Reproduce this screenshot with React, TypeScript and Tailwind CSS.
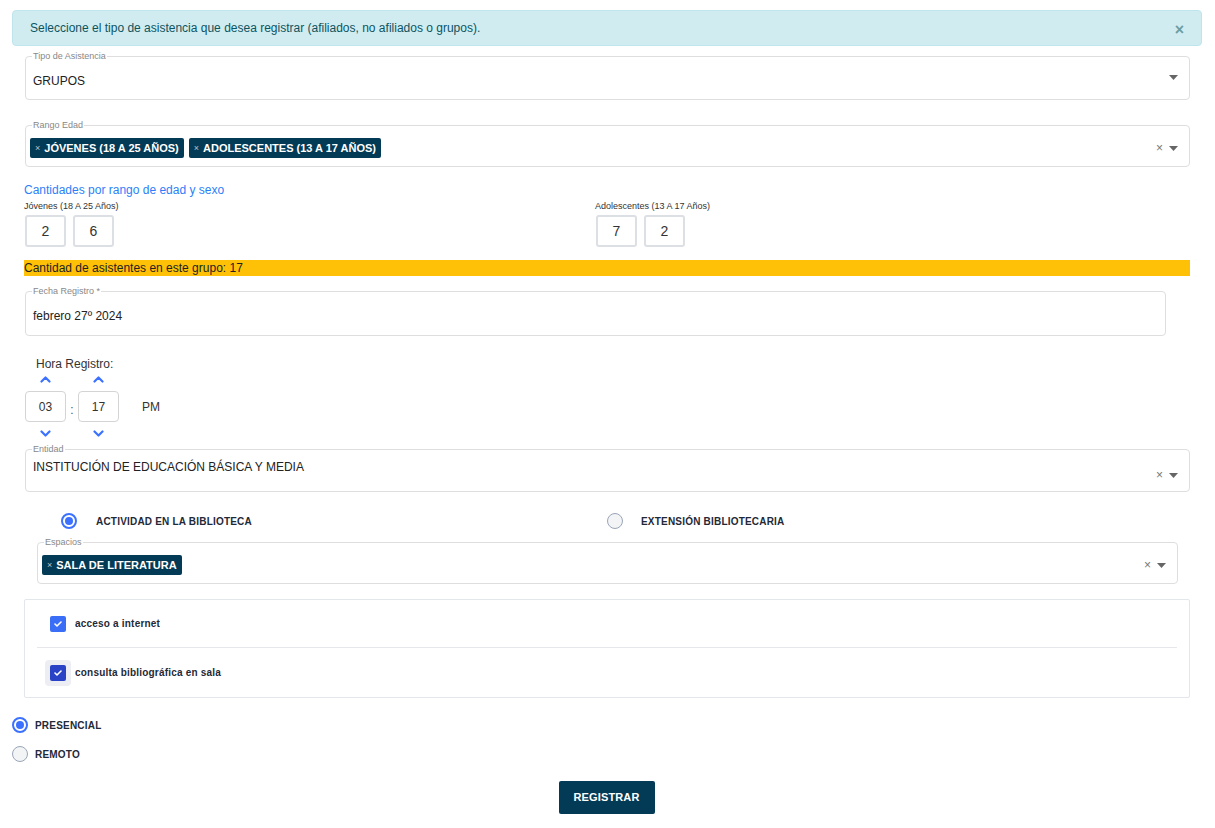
import React from "react";

function Caret() {
  return (
    <svg width="9" height="5" viewBox="0 0 9 5" className="block">
      <path d="M0 0 L9 0 L4.5 5 Z" fill="#666" />
    </svg>
  );
}

function Clear() {
  return <span className="text-[12px] leading-none text-[#777]">×</span>;
}

function Chip({ text }: { text: string }) {
  return (
    <span className="inline-flex h-[20px] items-center rounded-[2px] bg-[#033a56] pl-[5px] pr-[5px] text-white">
      <span className="mr-[4px] text-[9px] leading-none text-[#b9c4cc]">×</span>
      <span className="text-[11px] font-bold leading-none">{text}</span>
    </span>
  );
}

function Field({
  legend,
  className,
  children,
}: {
  legend: string;
  className?: string;
  children: React.ReactNode;
}) {
  return (
    <fieldset className={`rounded-[4px] border border-[#dedede] pl-[7px] pr-[8px] ${className ?? ""}`}>
      <legend className="-ml-[1px] px-[1px] text-[9px] leading-[10px] text-[#888]">{legend}</legend>
      {children}
    </fieldset>
  );
}

function NumBox({ v }: { v: string }) {
  return (
    <div className="flex h-[32px] w-[41px] items-center justify-center rounded-[3px] border-2 border-[#dcdfe3] text-[14px] text-[#333]">
      {v}
    </div>
  );
}

function ChevUp() {
  return (
    <svg width="11" height="7" viewBox="0 0 11 7" className="block">
      <path d="M1.5 5.5 L5.5 1.5 L9.5 5.5" fill="none" stroke="#3b71fe" strokeWidth="2.2" strokeLinecap="round" strokeLinejoin="round" />
    </svg>
  );
}
function ChevDown() {
  return (
    <svg width="11" height="7" viewBox="0 0 11 7" className="block">
      <path d="M1.5 1.5 L5.5 5.5 L9.5 1.5" fill="none" stroke="#3b71fe" strokeWidth="2.2" strokeLinecap="round" strokeLinejoin="round" />
    </svg>
  );
}

function Radio({ on }: { on: boolean }) {
  return on ? (
    <span className="flex h-[16px] w-[16px] items-center justify-center rounded-full border-2 border-[#3b71fe] bg-white">
      <span className="h-[8px] w-[8px] rounded-full bg-[#3b71fe]" />
    </span>
  ) : (
    <span className="block h-[16px] w-[16px] rounded-full border border-[#9aa5b8] bg-[#f3f4f6]" />
  );
}

function Check({ dark }: { dark?: boolean }) {
  const box = (
    <span className={`flex h-[16px] w-[16px] items-center justify-center rounded-[2px] ${dark ? "bg-[#2a43c6]" : "bg-[#3b6ef6]"}`}>
      <svg width="8" height="6" viewBox="0 0 8 6">
        <path d="M1 3 L3 5 L7 1" fill="none" stroke="white" strokeWidth="1.6" strokeLinecap="round" strokeLinejoin="round" />
      </svg>
    </span>
  );
  if (dark)
    return (
      <span className="-m-[5px] flex h-[26px] w-[26px] items-center justify-center rounded-[4px] bg-[#eceef3]">{box}</span>
    );
  return box;
}

export default function App() {
  return (
    <div className="min-h-[828px] w-[1215px] bg-white pb-[14px] font-['Liberation_Sans',Arial,sans-serif] text-[#222]">
      {/* Alert */}
      <div className="ml-[12px] mt-[10px] flex h-[36px] w-[1190px] items-center justify-between rounded-[4px] border border-[#bee5eb] bg-[#d1ecf1] pl-[17px] pr-[17px]">
        <span className="text-[12px] text-[#0c5460]">
          Seleccione el tipo de asistencia que desea registrar (afiliados, no afiliados o grupos).
        </span>
        <span className="mt-[4px] text-[16px] font-bold leading-none text-[#6a9ea3]">×</span>
      </div>

      {/* Tipo de Asistencia */}
      <Field legend="Tipo de Asistencia" className="ml-[25px] mt-[5px] w-[1165px]">
        <div className="flex h-[38px] items-start justify-between pr-[3px]">
          <span className="pt-[13px] text-[12px] leading-[14px] text-[#222]">GRUPOS</span>
          <span className="pt-[14px]">
            <Caret />
          </span>
        </div>
      </Field>

      {/* Rango Edad */}
      <Field legend="Rango Edad" className="ml-[25px] mt-[20px] w-[1165px]">
        <div className="flex h-[36px] items-center justify-between pr-[3px]">
          <div className="-ml-[3px] flex gap-[5px]">
            <Chip text="JÓVENES (18 A 25 AÑOS)" />
            <Chip text="ADOLESCENTES (13 A 17 AÑOS)" />
          </div>
          <div className="flex items-center gap-[6px]">
            <Clear />
            <Caret />
          </div>
        </div>
      </Field>

      {/* Cantidades */}
      <div className="ml-[24px] mt-[16px]">
        <div className="text-[12px] leading-[14px] text-[#2d7ff9]">Cantidades por rango de edad y sexo</div>
        <div className="mt-[4px] flex">
          <div className="w-[571px]">
            <div className="text-[9px] leading-[10px] text-[#333]">Jóvenes (18 A 25 Años)</div>
            <div className="ml-[1px] mt-[4px] flex gap-[7px]">
              <NumBox v="2" />
              <NumBox v="6" />
            </div>
          </div>
          <div>
            <div className="text-[9px] leading-[10px] text-[#333]">Adolescentes (13 A 17 Años)</div>
            <div className="ml-[1px] mt-[4px] flex gap-[7px]">
              <NumBox v="7" />
              <NumBox v="2" />
            </div>
          </div>
        </div>
      </div>

      {/* Yellow bar */}
      <div className="ml-[24px] mt-[13px] flex h-[16px] w-[1166px] items-center bg-[#ffc107] text-[12px] text-[#222]">
        Cantidad de asistentes en este grupo: 17
      </div>

      {/* Fecha */}
      <Field legend="Fecha Registro *" className="ml-[25px] mt-[10px] w-[1141px]">
        <div className="flex h-[39px] items-center">
          <span className="text-[12px] text-[#222]">febrero 27º 2024</span>
        </div>
      </Field>

      {/* Hora */}
      <div className="ml-[25px] mt-[21px]">
        <div className="ml-[11px] text-[12px] leading-[14px] text-[#333]">Hora Registro:</div>
        <div className="mt-[5px] flex items-start">
          <div className="flex w-[41px] flex-col items-center">
            <ChevUp />
            <div className="mt-[8px] flex h-[31px] w-[41px] items-center justify-center rounded-[4px] border border-[#d4d4d4] text-[12px] text-[#333]">03</div>
            <div className="mt-[8px]"><ChevDown /></div>
          </div>
          <div className="flex h-[53px] w-[12px] items-end justify-center pb-[10px] text-[12px] text-[#555]">:</div>
          <div className="flex w-[41px] flex-col items-center">
            <ChevUp />
            <div className="mt-[8px] flex h-[31px] w-[41px] items-center justify-center rounded-[4px] border border-[#d4d4d4] text-[12px] text-[#333]">17</div>
            <div className="mt-[8px]"><ChevDown /></div>
          </div>
          <div className="ml-[23px] flex h-[46px] items-end pb-[6px] text-[12px] text-[#333]">PM</div>
        </div>
      </div>

      {/* Entidad */}
      <Field legend="Entidad" className="ml-[25px] mt-[7px] w-[1165px]">
        <div className="flex h-[37px] justify-between pr-[3px]">
          <span className="pt-[6px] text-[12px] leading-[14px] text-[#222]">INSTITUCIÓN DE EDUCACIÓN BÁSICA Y MEDIA</span>
          <div className="flex items-center gap-[6px] pt-[5px]">
            <Clear />
            <Caret />
          </div>
        </div>
      </Field>

      {/* Tipo actividad radios */}
      <div className="ml-[61px] mt-[21px] flex items-center">
        <div className="flex w-[546px] items-center gap-[19px]">
          <Radio on />
          <span className="text-[10px] font-bold tracking-[0.2px] text-[#1f2937]">ACTIVIDAD EN LA BIBLIOTECA</span>
        </div>
        <div className="flex items-center gap-[18px]">
          <Radio on={false} />
          <span className="text-[10px] font-bold tracking-[0.2px] text-[#1f2937]">EXTENSIÓN BIBLIOTECARIA</span>
        </div>
      </div>

      {/* Espacios */}
      <Field legend="Espacios" className="ml-[37px] mt-[8px] w-[1141px]">
        <div className="flex h-[36px] items-center justify-between pr-[3px]">
          <div className="-ml-[3px] flex">
            <Chip text="SALA DE LITERATURA" />
          </div>
          <div className="flex items-center gap-[6px]">
            <Clear />
            <Caret />
          </div>
        </div>
      </Field>

      {/* Checkbox card */}
      <div className="ml-[24px] mt-[15px] w-[1166px] rounded-[2px] border border-[#e3e6ea] px-[12px]">
        <div className="flex h-[48px] items-center gap-[9px] border-b border-[#e5e7eb] pl-[13px]">
          <Check />
          <span className="text-[10px] font-bold tracking-[0.2px] text-[#1f2937]">acceso a internet</span>
        </div>
        <div className="flex h-[49px] items-center gap-[9px] pl-[13px]">
          <Check dark />
          <span className="text-[10px] font-bold tracking-[0.2px] text-[#1f2937]">consulta bibliográfica en sala</span>
        </div>
      </div>

      {/* Presencial / Remoto */}
      <div className="ml-[12px] mt-[19px] flex flex-col gap-[13px]">
        <div className="flex items-center gap-[7px]">
          <Radio on />
          <span className="text-[10px] font-bold tracking-[0.2px] text-[#1f2937]">PRESENCIAL</span>
        </div>
        <div className="flex items-center gap-[7px]">
          <Radio on={false} />
          <span className="text-[10px] font-bold tracking-[0.2px] text-[#1f2937]">REMOTO</span>
        </div>
      </div>

      {/* Button */}
      <div className="mt-[19px] flex justify-center">
        <button className="-ml-[2px] h-[33px] w-[96px] rounded-[2px] bg-[#033a56] text-[11px] font-bold tracking-[0.15px] text-white">
          REGISTRAR
        </button>
      </div>
    </div>
  );
}
